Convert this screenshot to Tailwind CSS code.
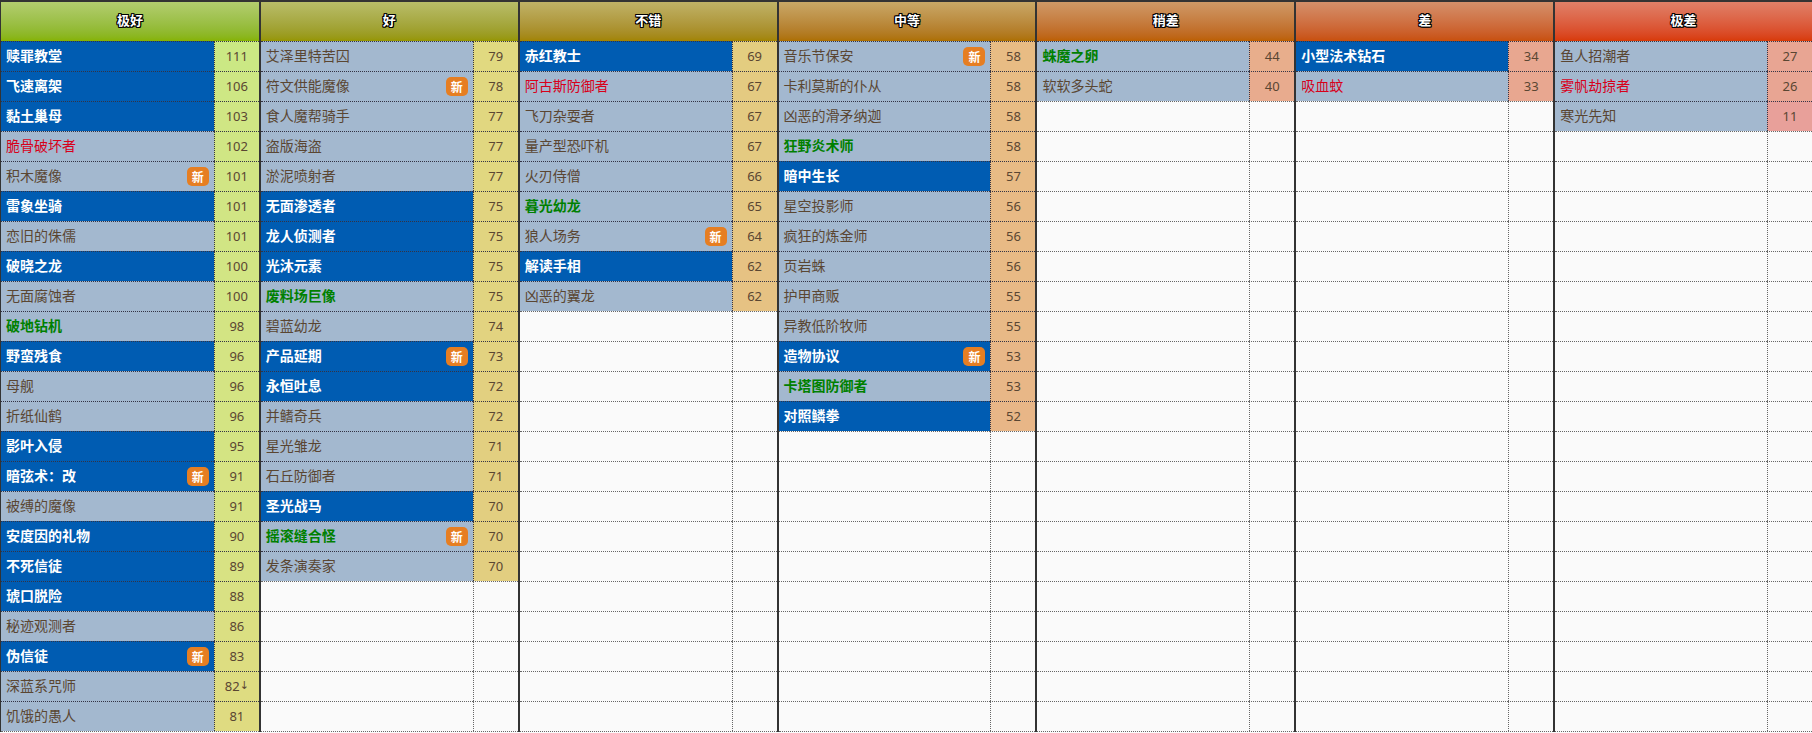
<!DOCTYPE html>
<html lang="zh">
<head>
<meta charset="UTF-8">
<meta name="viewport" content="width=device-width, initial-scale=1.0">
<title>卡牌评分</title>
<script src="https://cdn.jsdelivr.net/npm/@tailwindcss/browser@4"></script>
</head>
<body class="bg-[#fafafa] overflow-hidden font-['Noto_Sans_CJK_SC','Noto_Sans',sans-serif] text-[14px] text-[#5a4632]">
<div id="board" class="grid grid-cols-7 border-t-2 border-[#333]"></div>
<script>
  const ROWS = 23;
  // b = blue card, g = green name, r = red name, n = new badge
  const tiers = [
    { title: '极好', head: 'from-[#b3cd6e] to-[#86b300]', cards: [
      ['赎罪教堂',111,'b'],['飞速离架',106,'b'],['黏土巢母',103,'b'],['脆骨破坏者',102,'r'],['积木魔像',101,'n'],
      ['雷象坐骑',101,'b'],['恋旧的侏儒',101],['破晓之龙',100,'b'],['无面腐蚀者',100],['破地钻机',98,'g'],
      ['野蛮残食',96,'b'],['母舰',96],['折纸仙鹤',96],['影叶入侵',95,'b'],['暗弦术：改',91,'bn'],['被缚的魔像',91],
      ['安度因的礼物',90,'b'],['不死信徒',89,'b'],['琥口脱险',88,'b'],['秘迹观测者',86],['伪信徒',83,'bn'],
      ['深蓝系咒师','82↓'],['饥饿的愚人',81]
    ]},
    { title: '好', head: 'from-[#b9bd68] to-[#969600]', cards: [
      ['艾泽里特苦囚',79],['符文供能魔像',78,'n'],['食人魔帮骑手',77],['盗版海盗',77],['淤泥喷射者',77],
      ['无面渗透者',75,'b'],['龙人侦测者',75,'b'],['光沐元素',75,'b'],['废料场巨像',75,'g'],['碧蓝幼龙',74],
      ['产品延期',73,'bn'],['永恒吐息',72,'b'],['并鳍奇兵',72],['星光雏龙',71],['石丘防御者',71],['圣光战马',70,'b'],
      ['摇滚缝合怪',70,'gn'],['发条演奏家',70]
    ]},
    { title: '不错', head: 'from-[#c0b266] to-[#a28400]', cards: [
      ['赤红教士',69,'b'],['阿古斯防御者',67,'r'],['飞刀杂耍者',67],['量产型恐吓机',67],['火刃侍僧',66],
      ['暮光幼龙',65,'g'],['狼人场务',64,'n'],['解读手相',62,'b'],['凶恶的翼龙',62]
    ]},
    { title: '中等', head: 'from-[#c9a866] to-[#ad7000]', cards: [
      ['音乐节保安',58,'n'],['卡利莫斯的仆从',58],['凶恶的滑矛纳迦',58],['狂野炎术师',58,'g'],['暗中生长',57,'b'],
      ['星空投影师',56],['疯狂的炼金师',56],['页岩蛛',56],['护甲商贩',55],['异教低阶牧师',55],
      ['造物协议',53,'bn'],['卡塔图防御者',53,'g'],['对照鳞拳',52,'b']
    ]},
    { title: '稍差', head: 'from-[#cf9966] to-[#bc6000]', cards: [
      ['蛛魔之卵',44,'g'],['软软多头蛇',40]
    ]},
    { title: '差', head: 'from-[#d4906a] to-[#c8500b]', cards: [
      ['小型法术钻石',34,'b'],['吸血蚊',33,'r']
    ]},
    { title: '极差', head: 'from-[#df8068] to-[#d83a06]', cards: [
      ['鱼人招潮者',27],['雾帆劫掠者',26,'r'],['寒光先知',11]
    ]}
  ];

  // score colour stops, read off the picture
  const stops = [[111,[203,232,132]],[89,[216,226,131]],[79,[225,217,128]],[70,[226,206,128]],[58,[232,188,132]],[44,[232,174,140]],[34,[232,167,144]],[11,[232,160,154]]];
  function scoreColor(v) {
    if (v >= stops[0][0]) return `rgb(${stops[0][1]})`;
    for (let i = 1; i < stops.length; i++) {
      const [hi, a] = stops[i - 1], [lo, b] = stops[i];
      if (v >= lo) {
        const t = (hi - v) / (hi - lo);
        return `rgb(${a.map((c, k) => Math.round(c + (b[k] - c) * t))})`;
      }
    }
    return `rgb(${stops[stops.length - 1][1]})`;
  }

  const badge = '<span class="ml-auto mr-[5px] w-[22px] h-[19px] rounded-[5px] bg-[#e67e22] text-white text-[12px] font-bold leading-[19px] text-center shrink-0">新</span>';
  const arrow = `<span class="font-['DejaVu_Sans',sans-serif] text-[11px]">↓</span>`;

  function row(card) {
    if (!card) {
      return `<div class="flex h-[30px]"><div class="flex-1 border-t border-dotted border-[#666]"></div><div class="w-[45px] border-t border-l border-dotted border-[#666]"></div></div>`;
    }
    const [name, score, flags = ''] = card;
    let bg = 'bg-[#a3b8cf]', color = '';
    if (flags.includes('b')) { bg = 'bg-[#005cb2]'; color = 'text-white font-bold'; }
    if (flags.includes('g')) color = 'text-[#008000] font-bold';
    if (flags.includes('r')) color = 'text-[#d8001a]';
    return `<div class="flex h-[30px]">
      <div class="flex-1 min-w-0 flex items-center pl-[5px] border-t border-dotted border-[#334] ${bg} ${color}"><span class="pb-[2px]">${name}</span>${flags.includes('n') ? badge : ''}</div>
      <div class="w-[45px] flex items-center justify-center border-t border-l border-dotted border-[#334] font-['Noto_Sans',sans-serif] text-[13px]" style="background-color:${scoreColor(parseInt(score))}">${String(score).replace('↓', arrow)}</div>
    </div>`;
  }

  document.getElementById('board').innerHTML = tiers.map((tier, i) => {
    let rows = '';
    for (let r = 0; r < ROWS; r++) rows += row(tier.cards[r]);
    return `<div class="${i ? 'border-l-2' : 'border-l'} border-[#333] min-w-0">
      <div class="h-[39px] pb-[3px] flex items-center justify-center bg-linear-to-b ${tier.head} text-white font-bold text-[13px] [text-shadow:1px_1px_0_#000,-1px_-1px_0_#000,1px_-1px_0_#000,-1px_1px_0_#000,0_1px_0_#000,0_-1px_0_#000,1px_0_0_#000,-1px_0_0_#000]">${tier.title}</div>
      ${rows}
      <div class="border-t border-dotted border-[#666]"></div>
    </div>`;
  }).join('');
</script>
</body>
</html>
